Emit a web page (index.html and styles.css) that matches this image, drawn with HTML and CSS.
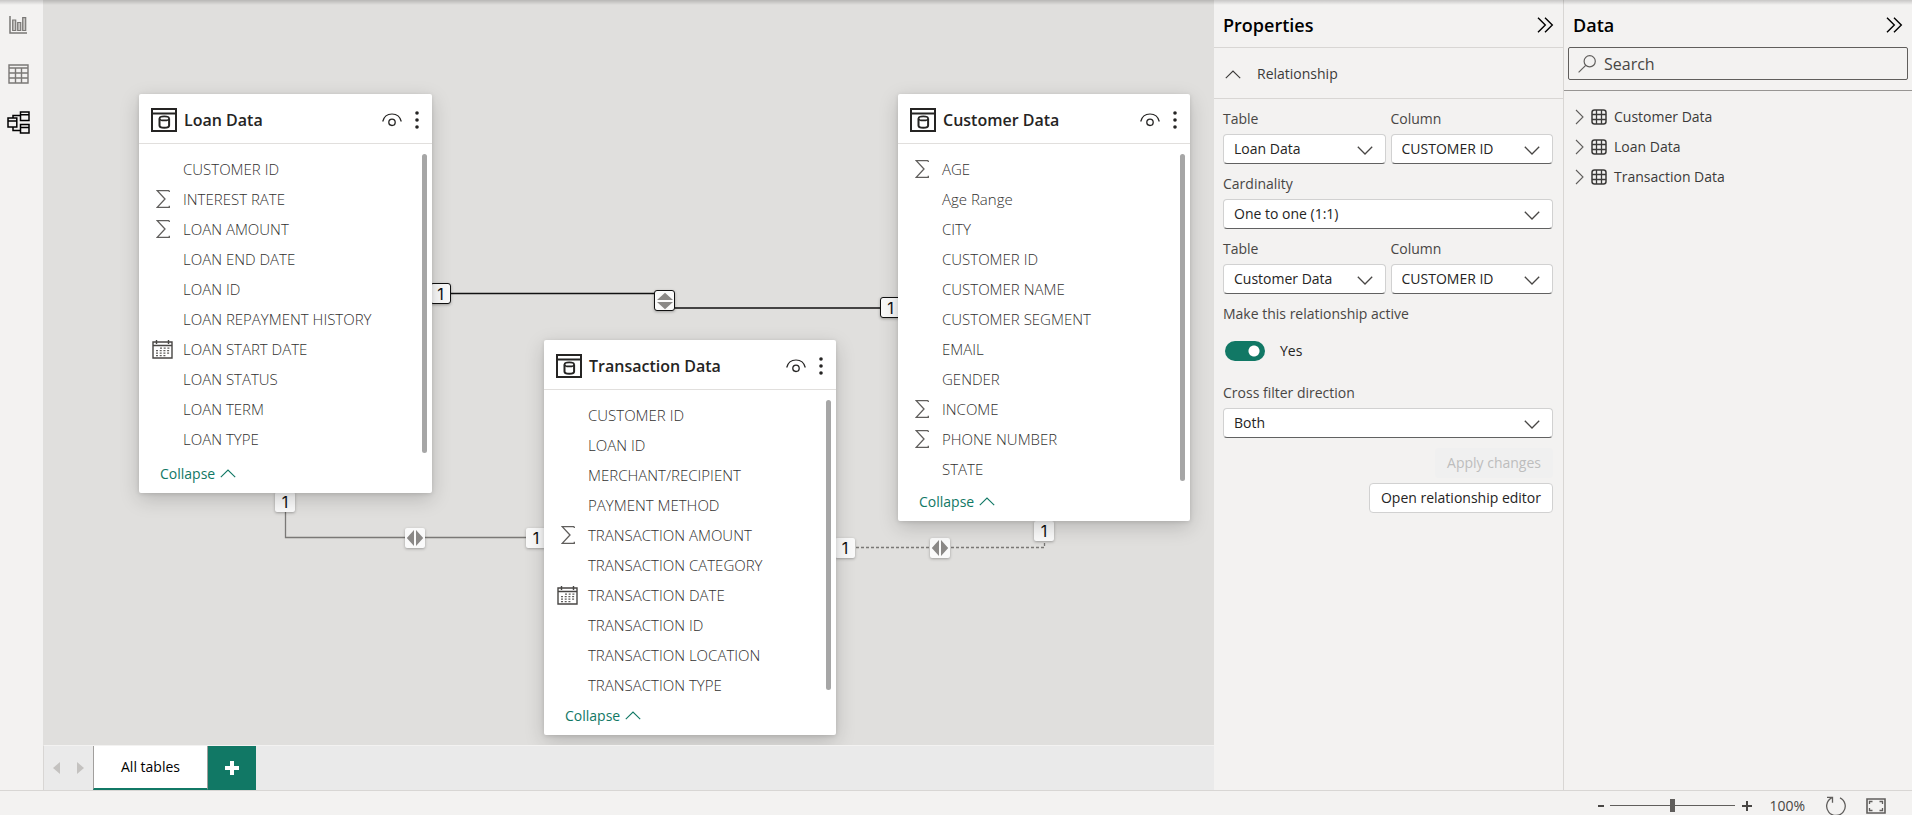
FILE: index.html
```
<!DOCTYPE html>
<html lang="en">
<head>
<meta charset="utf-8">
<title>Model view</title>
<link rel="stylesheet" href="styles.css">
</head>
<body>
<svg class="defs" aria-hidden="true">
  <symbol id="i-table" viewBox="0 0 26 24"><path d="M1 1h24v22H1zM1 5.500h24" fill="none" stroke="#252423" stroke-width="2"/><path d="M8.500 10.500v7c0 1.400 2 2.300 4.800 2.300s4.800-.9 4.800-2.300v-7" fill="none" stroke="#252423" stroke-width="2"/><ellipse cx="13.300" cy="10.400" rx="4.800" ry="2" fill="none" stroke="#252423" stroke-width="1.600"/></symbol>
  <symbol id="i-eye" viewBox="0 0 20 14"><path d="M.7 8.500C1.800 4 5.500 1 10 1s8.200 3 9.300 7.500" fill="none" stroke="#252423" stroke-width="1.200"/><circle cx="10" cy="9.300" r="3.200" fill="none" stroke="#252423" stroke-width="1.300"/></symbol>
  <symbol id="i-dots" viewBox="0 0 4 18"><g fill="#252423"><circle cx="2" cy="2" r="1.800"/><circle cx="2" cy="9" r="1.800"/><circle cx="2" cy="16" r="1.800"/></g></symbol>
  <symbol id="i-sum" viewBox="0 0 14 18"><path d="M13.300.7v1.300M13.300.7H1.200L9 9l-7.800 8.300h12.100v-1.600" fill="none" stroke="#605e5c" stroke-width="1.300"/></symbol>
  <symbol id="i-cal" viewBox="0 0 21 19"><path d="M1 2h19v16H1zM1 5.500h19M4.500 0v4M16.500 0v4" fill="none" stroke="#484644" stroke-width="1.400"/><path d="M8 8.200h10M4 10.700h14M4 13.200h14M4 15.600h10" fill="none" stroke="#605e5c" stroke-width="1.300" stroke-dasharray="2 1.700"/></symbol>
  <symbol id="i-up" viewBox="0 0 16 9"><path d="M.8 8.200 8 1l7.200 7.200" fill="none" stroke="currentColor" stroke-width="1.100"/></symbol>
  <symbol id="i-down" viewBox="0 0 16 9"><path d="M.8.8 8 8 15.200.8" fill="none" stroke="#484644" stroke-width="1.300"/></symbol>
  <symbol id="i-right" viewBox="0 0 9 16"><path d="M1 1l7 7-7 7" fill="none" stroke="#605e5c" stroke-width="1.100"/></symbol>
  <symbol id="i-dbl" viewBox="0 0 17 16"><path d="M1 .7 8.300 8 1 15.300M8 .7 15.300 8 8 15.300" fill="none" stroke="#000" stroke-width="1.400"/></symbol>
  <symbol id="i-grid" viewBox="0 0 16 16"><rect x="1" y="1" width="14" height="14" rx="2.500" fill="none" stroke="#3b3a39" stroke-width="1.500"/><path d="M5.500 1v14M10.500 1v14M1 5.500h14M1 10.500h14" fill="none" stroke="#3b3a39" stroke-width="1.300"/></symbol>
  <symbol id="i-both" viewBox="0 0 18 18"><path d="M8 1v16L.8 9zM10 1v16l7.200-8z" fill="#8a8886"/></symbol>
</svg>
<div class="app">
  <nav class="rail" aria-label="Views">
    <button class="icon-btn rail-btn" aria-label="Report view"><svg width="18" height="18" viewBox="0 0 18 18"><path d="M1 0v17h17" fill="none" stroke="#7a7876" stroke-width="1.500"/><path d="M3.700 4h3v10.500h-3zM8.700 6.500h3v8h-3zM13.700 1.700h3v12.800h-3z" fill="#c8c6c4" stroke="#7a7876" stroke-width="1.200"/></svg></button>
    <button class="icon-btn rail-btn" aria-label="Table view"><svg width="21" height="20" viewBox="0 0 21 20"><path d="M1 1h19v18H1zM1 4h19M1 9h19M1 14h19M7.500 4v15M13.500 4v15" fill="none" stroke="#7a7876" stroke-width="1.400"/></svg></button>
    <button class="icon-btn rail-btn" aria-label="Model view"><svg width="23" height="23" viewBox="0 0 23 23"><g fill="none" stroke="#000" stroke-width="1.500"><path d="M13.500 1H22v8.500h-8.500zM13.500 3.800H22M1 7h8.800v9H1zM1 10h8.800M13.500 13.500H22V22h-8.500zM13.500 16.500H22"/><path d="M13.500 4.500H6V7M6 16v3.500h7.500"/></g></svg></button>
  </nav>
  <main class="model">
    <div class="canvas">
      <svg class="links" aria-hidden="true">
        <path d="M389 293.500H622V308H855" stroke="#111" stroke-width="1.500"/>
        <path d="M242.500 493V537.500H501" stroke="#7a7876" stroke-width="1.300"/>
        <path d="M793 547.500H1001.500V521" stroke="#7a7876" stroke-width="1.300" stroke-dasharray="3 2"/>
      </svg>
      <span class="badge picked b1">1</span>
      <span class="badge picked b2"><svg class="vert" width="18" height="18"><use href="#i-both"/></svg></span>
      <span class="badge picked b3">1</span>
      <span class="badge b4">1</span>
      <span class="badge b5"><svg width="18" height="18"><use href="#i-both"/></svg></span>
      <span class="badge b6">1</span>
      <span class="badge b7">1</span>
      <span class="badge b8"><svg width="18" height="18"><use href="#i-both"/></svg></span>
      <span class="badge b9">1</span>

      <section class="card loan">
        <header class="card-head"><svg width="26" height="24"><use href="#i-table"/></svg><h2>Loan Data</h2><button class="icon-btn" aria-label="Visibility"><svg width="20" height="14"><use href="#i-eye"/></svg></button><button class="icon-btn" aria-label="More options"><svg width="4" height="18"><use href="#i-dots"/></svg></button></header>
        <div class="card-body"><ul class="fields">
          <li>CUSTOMER ID</li>
          <li><svg class="sum"><use href="#i-sum"/></svg>INTEREST RATE</li>
          <li><svg class="sum"><use href="#i-sum"/></svg>LOAN AMOUNT</li>
          <li>LOAN END DATE</li>
          <li>LOAN ID</li>
          <li>LOAN REPAYMENT HISTORY</li>
          <li><svg class="cal"><use href="#i-cal"/></svg>LOAN START DATE</li>
          <li>LOAN STATUS</li>
          <li>LOAN TERM</li>
          <li>LOAN TYPE</li>
        </ul><div class="thumb"></div></div>
        <button class="collapse">Collapse<svg width="16" height="9"><use href="#i-up"/></svg></button>
      </section>

      <section class="card transaction">
        <header class="card-head"><svg width="26" height="24"><use href="#i-table"/></svg><h2>Transaction Data</h2><button class="icon-btn" aria-label="Visibility"><svg width="20" height="14"><use href="#i-eye"/></svg></button><button class="icon-btn" aria-label="More options"><svg width="4" height="18"><use href="#i-dots"/></svg></button></header>
        <div class="card-body"><ul class="fields">
          <li>CUSTOMER ID</li>
          <li>LOAN ID</li>
          <li>MERCHANT/RECIPIENT</li>
          <li>PAYMENT METHOD</li>
          <li><svg class="sum"><use href="#i-sum"/></svg>TRANSACTION AMOUNT</li>
          <li>TRANSACTION CATEGORY</li>
          <li><svg class="cal"><use href="#i-cal"/></svg>TRANSACTION DATE</li>
          <li>TRANSACTION ID</li>
          <li>TRANSACTION LOCATION</li>
          <li>TRANSACTION TYPE</li>
        </ul><div class="thumb"></div></div>
        <button class="collapse">Collapse<svg width="16" height="9"><use href="#i-up"/></svg></button>
      </section>

      <section class="card customer">
        <header class="card-head"><svg width="26" height="24"><use href="#i-table"/></svg><h2>Customer Data</h2><button class="icon-btn" aria-label="Visibility"><svg width="20" height="14"><use href="#i-eye"/></svg></button><button class="icon-btn" aria-label="More options"><svg width="4" height="18"><use href="#i-dots"/></svg></button></header>
        <div class="card-body"><ul class="fields">
          <li><svg class="sum"><use href="#i-sum"/></svg>AGE</li>
          <li>Age Range</li>
          <li>CITY</li>
          <li>CUSTOMER ID</li>
          <li>CUSTOMER NAME</li>
          <li>CUSTOMER SEGMENT</li>
          <li>EMAIL</li>
          <li>GENDER</li>
          <li><svg class="sum"><use href="#i-sum"/></svg>INCOME</li>
          <li><svg class="sum"><use href="#i-sum"/></svg>PHONE NUMBER</li>
          <li>STATE</li>
        </ul><div class="thumb"></div></div>
        <button class="collapse">Collapse<svg width="16" height="9"><use href="#i-up"/></svg></button>
      </section>
    </div>
    <div class="tabs">
      <button class="icon-btn step" aria-label="Previous"><svg width="7" height="12"><path d="M7 0v12L0 6z" fill="#c4c2c0"/></svg></button>
      <button class="icon-btn step" aria-label="Next"><svg width="7" height="12"><path d="M0 0v12l7-6z" fill="#c4c2c0"/></svg></button>
      <button class="tab">All tables</button>
      <button class="add" aria-label="New layout"><svg width="14" height="14"><path d="M7 0v14M0 7h14" stroke="#fff" stroke-width="4"/></svg></button>
    </div>
  </main>

  <aside class="panel">
    <header class="panel-head lined"><h1>Properties</h1><button class="icon-btn" aria-label="Collapse pane"><svg width="17" height="16"><use href="#i-dbl"/></svg></button></header>
    <button class="section"><svg width="16" height="9"><use href="#i-up"/></svg>Relationship</button>
    <form class="form">
      <div class="pair">
        <div class="field"><label for="t1">Table</label><div class="drop"><select id="t1"><option>Loan Data</option></select><svg width="16" height="9"><use href="#i-down"/></svg></div></div>
        <div class="field"><label for="c1">Column</label><div class="drop"><select id="c1"><option>CUSTOMER ID</option></select><svg width="16" height="9"><use href="#i-down"/></svg></div></div>
      </div>
      <div class="field"><label for="card">Cardinality</label><div class="drop"><select id="card"><option>One to one (1:1)</option></select><svg width="16" height="9"><use href="#i-down"/></svg></div></div>
      <div class="pair">
        <div class="field"><label for="t2">Table</label><div class="drop"><select id="t2"><option>Customer Data</option></select><svg width="16" height="9"><use href="#i-down"/></svg></div></div>
        <div class="field"><label for="c2">Column</label><div class="drop"><select id="c2"><option>CUSTOMER ID</option></select><svg width="16" height="9"><use href="#i-down"/></svg></div></div>
      </div>
      <div class="field"><label for="active">Make this relationship active</label><div class="switch-row"><input class="switch" type="checkbox" id="active" checked><span>Yes</span></div></div>
      <div class="field"><label for="dir">Cross filter direction</label><div class="drop"><select id="dir"><option>Both</option></select><svg width="16" height="9"><use href="#i-down"/></svg></div></div>
      <div class="actions"><button type="button" class="btn" disabled>Apply changes</button><button type="button" class="btn">Open relationship editor</button></div>
    </form>
  </aside>

  <aside class="panel data">
    <header class="panel-head"><h1>Data</h1><button class="icon-btn" aria-label="Collapse pane"><svg width="17" height="16"><use href="#i-dbl"/></svg></button></header>
    <label class="search"><svg width="18" height="18" viewBox="0 0 18 18"><circle cx="11.700" cy="6.300" r="5.600" fill="none" stroke="#605e5c" stroke-width="1.200"/><path d="M7.700 10.300.6 17.400" stroke="#605e5c" stroke-width="1.200"/></svg><input type="text" placeholder="Search" aria-label="Search"></label>
    <ul class="tree">
      <li><svg width="9" height="16"><use href="#i-right"/></svg><svg width="16" height="16"><use href="#i-grid"/></svg>Customer Data</li>
      <li><svg width="9" height="16"><use href="#i-right"/></svg><svg width="16" height="16"><use href="#i-grid"/></svg>Loan Data</li>
      <li><svg width="9" height="16"><use href="#i-right"/></svg><svg width="16" height="16"><use href="#i-grid"/></svg>Transaction Data</li>
    </ul>
  </aside>
</div>
<footer class="status">
  <button class="icon-btn" aria-label="Zoom out"><svg width="6" height="12"><path d="M0 6h6" stroke="#484644" stroke-width="2"/></svg></button>
  <input class="zoom" type="range" min="0" max="200" value="100" aria-label="Zoom">
  <button class="icon-btn" aria-label="Zoom in"><svg width="10" height="12"><path d="M0 6h10M5 1v10" stroke="#484644" stroke-width="2"/></svg></button>
  <span class="percent">100%</span>
  <button class="icon-btn" aria-label="Reset"><svg width="22" height="20" viewBox="0 0 22 20"><path d="M6.700 1.900A9.300 9.300 0 1 0 15 1.800" fill="none" stroke="#605e5c" stroke-width="1.300"/><path d="M2 1.300h5.500v5.500" fill="none" stroke="#605e5c" stroke-width="1.300"/></svg></button>
  <button class="icon-btn" aria-label="Fit to page"><svg width="20" height="16" viewBox="0 0 20 16"><path d="M1 1h18v14H1z" fill="none" stroke="#605e5c" stroke-width="1.600"/><path d="M3.500 6V3.500h3M13.500 3.500h3V6M16.500 10v2.500h-3M6.500 12.500h-3V10" fill="none" stroke="#605e5c" stroke-width="1.300"/></svg></button>
</footer>
</body>
</html>
```

FILE: styles.css
```
* { box-sizing: border-box; }
body {
  margin: 0;
  height: 100vh;
  display: flex;
  flex-direction: column;
  overflow: hidden;
  background: #f3f2f1;
  color: #252423;
  font: 14px/20px "Open Sans", "Noto Sans", sans-serif;
}
h1, h2, ul { margin: 0; padding: 0; }
ul { list-style: none; }
svg { display: block; flex: none; }
button, input, select { font: inherit; color: inherit; }
.defs { position: absolute; width: 0; height: 0; }
.icon-btn { display: grid; place-items: center; padding: 0; border: 0; background: none; }

.app { flex: 1; min-height: 0; display: flex; position: relative; }
.app::before {
  content: "";
  position: absolute;
  inset: 0 0 auto;
  height: 5px;
  z-index: 5;
  background: linear-gradient(rgba(0, 0, 0, .18), rgba(0, 0, 0, 0));
}
.rail { width: 43px; display: flex; flex-direction: column; }
.rail-btn { width: 36px; height: 49px; }

/* Model canvas */
.model { flex: 1; min-width: 0; display: flex; flex-direction: column; }
.canvas { flex: 1; position: relative; overflow: hidden; background: #e0dfdd; }
.links { position: absolute; inset: 0; width: 100%; height: 100%; fill: none; }
.badge {
  position: absolute;
  width: 20px;
  height: 20px;
  display: grid;
  place-items: center;
  border-radius: 2px;
  background: #fafafa;
  color: #111;
  font: 16px/20px Inter, "Open Sans", sans-serif;
  box-shadow: 0 1px 3px rgba(0, 0, 0, .3);
}
.picked { width: 21px; height: 21px; border: 1px solid #111; border-radius: 3px; }
.vert { transform: rotate(90deg); }
.b1 { left: 387px; top: 283px; }
.b2 { left: 611px; top: 290px; }
.b3 { left: 837px; top: 297px; }
.b4 { left: 232px; top: 492px; }
.b5 { left: 362px; top: 528px; }
.b6 { left: 483px; top: 528px; }
.b7 { left: 792px; top: 538px; }
.b8 { left: 887px; top: 538px; }
.b9 { left: 991px; top: 521px; }

.card {
  position: absolute;
  width: 292px;
  display: flex;
  flex-direction: column;
  border-radius: 2px;
  background: #fff;
  box-shadow: 0 6px 20px rgba(0, 0, 0, .18), 0 1px 4px rgba(0, 0, 0, .12);
}
.loan { left: 96px; top: 94px; width: 293px; height: 399px; }
.transaction { left: 501px; top: 340px; height: 395px; }
.customer { left: 855px; top: 94px; height: 427px; }
.card-head {
  height: 50px;
  flex: none;
  display: flex;
  align-items: center;
  gap: 7px;
  padding: 3px 13px 0 12px;
  border-bottom: 1px solid #e1dfdd;
}
.card-head h2 { flex: 1; font-size: 16px; font-weight: 600; }
.card-head .icon-btn + .icon-btn { margin-left: 6px; }
.card-body { flex: 1; min-height: 0; display: flex; padding: 10px 5px 0 0; }
.fields { flex: 1; overflow: hidden; }
.fields li {
  display: flex;
  align-items: center;
  height: 30px;
  padding-left: 44px;
  color: #323130;
  font-size: 15px;
  font-weight: 300;
}
.sum { width: 14px; height: 18px; margin: 0 13px 0 -27px; }
.cal { width: 21px; height: 19px; margin: 0 10px 0 -31px; }
.thumb { width: 5px; border-radius: 3px; background: #a6a6a6; }
.transaction .thumb { margin-bottom: 5px; }
.collapse {
  height: 40px;
  flex: none;
  display: flex;
  align-items: center;
  gap: 5px;
  padding: 1px 21px 0;
  border: 0;
  background: none;
  color: #117865;
}

/* Layout tabs */
.tabs { height: 45px; display: flex; background: #eaeaea; border-top: 1px solid #f3f2f1; border-left: 1px solid #d8d6d4; }
.step { width: 24px; }
.step + .step { width: 25px; }
.tab {
  width: 115px;
  border: 0;
  border-left: 1px solid #a19f9d;
  border-right: 1px solid #a19f9d;
  border-bottom: 2px solid #117865;
  background: #fff;
  color: #000;
  font-weight: 500;
}
.add { width: 48px; display: grid; place-items: center; border: 0; background: #117865; }

/* Side panels */
.panel { width: 350px; border-right: 1px solid #d8d6d4; }
.panel.data { width: 348px; border-right: 0; }
.panel-head {
  height: 47px;
  display: flex;
  align-items: center;
  justify-content: space-between;
  padding: 2px 9px 0;
}
.lined { height: 48px; border-bottom: 1px solid #d8d6d4; }
.panel-head h1 { font-size: 18px; font-weight: 600; color: #000; }
.section {
  width: 100%;
  height: 51px;
  display: flex;
  align-items: center;
  gap: 16px;
  padding: 2px 11px 0;
  border: 0;
  border-bottom: 1px solid #d8d6d4;
  background: none;
  color: #3b3a39;
}
.form { display: flex; flex-direction: column; gap: 10px; padding: 10px 10px 0 9px; }
.pair { display: grid; grid-template-columns: 1fr 1fr; gap: 5px; }
.field { display: flex; flex-direction: column; gap: 5px; color: #484644; }
.drop { position: relative; }
.drop select {
  width: 100%;
  height: 30px;
  display: block;
  appearance: none;
  padding: 0 10px;
  border: 1px solid #d1d1d1;
  border-bottom-color: #616161;
  border-radius: 4px;
  background: #fff;
  color: #252423;
}
.drop svg { position: absolute; right: 13px; top: 12px; pointer-events: none; }
.switch-row { height: 44px; display: flex; align-items: center; gap: 15px; color: #252423; }
.switch {
  appearance: none;
  width: 40px;
  height: 20px;
  margin: 0 0 0 2px;
  border-radius: 10px;
  background: radial-gradient(circle at 29px 10px, #fff 5px, #117865 6px);
}
.actions { display: flex; flex-direction: column; align-items: flex-end; gap: 5px; }
.btn { height: 30px; padding: 0 11px; border: 1px solid #d1d1d1; border-radius: 4px; background: #fff; }
.btn:disabled { border-color: #f0f0f0; background: #f0f0f0; color: #bdbdbd; }

.search {
  height: 33px;
  display: flex;
  align-items: center;
  gap: 8px;
  margin: 0 4px 10px;
  padding: 0 9px;
  border: 1px solid #605e5c;
  border-radius: 2px;
}
.search input { flex: 1; min-width: 0; padding: 0; border: 0; outline: 0; background: none; font-size: 16px; }
.search input::placeholder { color: #484644; opacity: 1; }
.tree { padding: 11px; border-top: 1px solid #979593; }
.tree li { height: 30px; display: flex; align-items: center; gap: 7px; color: #3b3a39; }

/* Status bar */
.status {
  height: 25px;
  flex: none;
  display: flex;
  align-items: center;
  justify-content: flex-end;
  padding: 5px 26px 0;
  border-top: 1px solid #d8d6d4;
  color: #484644;
}
.zoom { appearance: none; width: 125px; height: 14px; margin: 0 7px 0 6px; background: linear-gradient(#605e5c, #605e5c) center / 100% 1px no-repeat; }
.zoom::-webkit-slider-thumb { appearance: none; width: 5px; height: 13px; background: #605e5c; }
.percent { margin: 0 20px 0 17px; }
.status .icon-btn:last-child { margin-left: 19px; }
```
